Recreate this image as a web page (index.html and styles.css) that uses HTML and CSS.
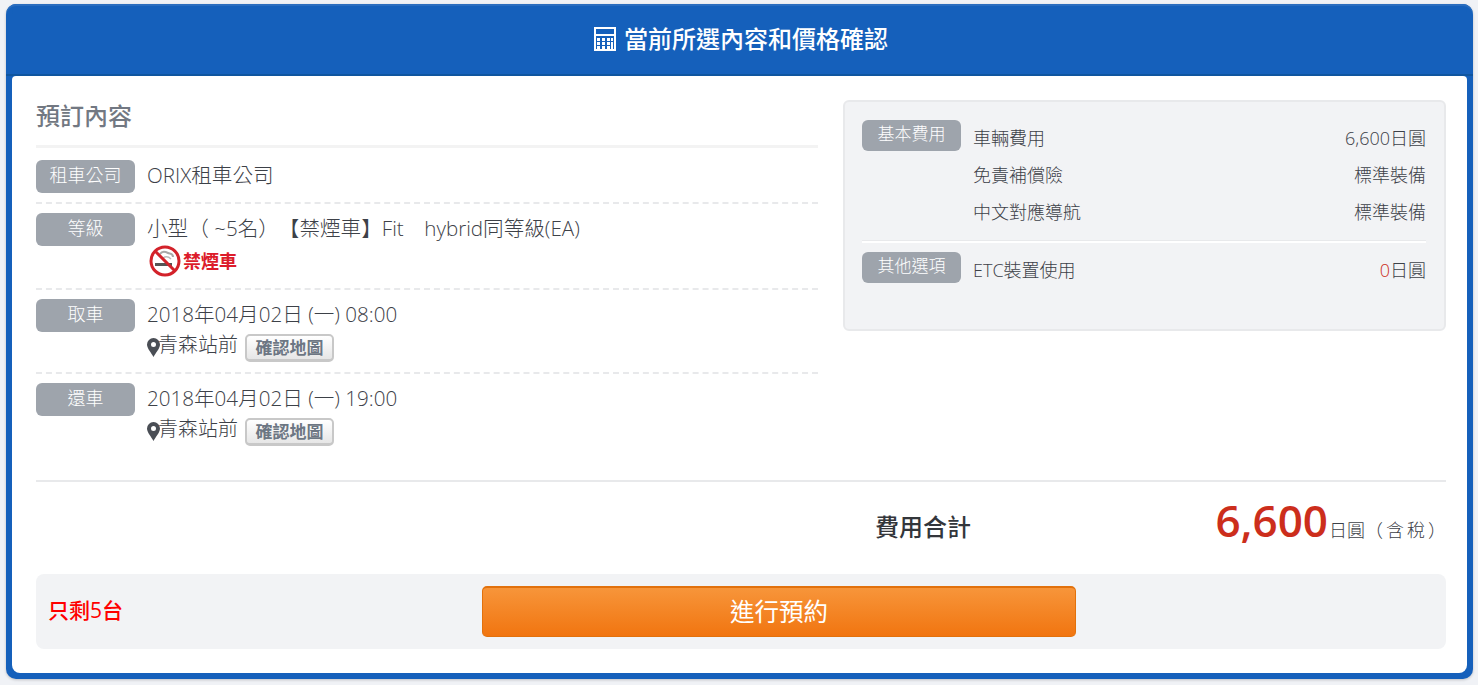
FILE: index.html
```html
<!DOCTYPE html>
<html lang="zh-Hant">
<head>
    <meta charset="UTF-8">
    <meta name="viewport" content="width=device-width, initial-scale=1.0">
    <title>當前所選內容和價格確認</title>
    <link rel="stylesheet" href="styles.css">
</head>
<body>
    <section class="confirm-panel">
        <h2 class="panel-title">
            <svg class="calc-icon" width="22" height="24" viewBox="0 0 22 24">
                <rect x="1" y="1" width="20" height="22" fill="none" stroke="#fff" stroke-width="2"/>
                <rect x="1" y="7" width="20" height="2" fill="#fff"/>
                <g fill="#fff">
                    <rect x="3" y="11" width="3" height="3"/><rect x="8" y="11" width="3" height="3"/><rect x="13" y="11" width="3" height="3"/><rect x="17" y="11" width="2" height="3"/>
                    <rect x="3" y="15" width="3" height="3"/><rect x="8" y="15" width="3" height="3"/><rect x="13" y="15" width="3" height="3"/><rect x="17" y="15" width="2" height="7"/>
                    <rect x="3" y="19" width="3" height="3"/><rect x="8" y="19" width="3" height="3"/><rect x="13" y="19" width="3" height="3"/>
                </g>
            </svg>
            當前所選內容和價格確認
        </h2>
        <div class="panel-body">
            <div class="summary">
                <div class="summary-left">
                    <h3 class="section-title">預訂內容</h3>
                    <div class="info-row">
                        <span class="tag">租車公司</span>
                        <div class="info-text"><p class="info-main">ORIX租車公司</p></div>
                    </div>
                    <div class="info-row">
                        <span class="tag">等級</span>
                        <div class="info-text">
                            <p class="info-main">小型（ ~5名）【禁煙車】Fit　hybrid同等級(EA)</p>
                            <p class="no-smoking">
                                <svg width="32" height="32" viewBox="0 0 32 32">
                                    <circle cx="16" cy="16" r="14" fill="#fff" stroke="#d3222a" stroke-width="3"/>
                                    <path d="M11 9c2-3 6-2 8-1s5 0 5 4" fill="none" stroke="#a8a8a8" stroke-width="2"/>
                                    <path d="M14 13c3-2 6-1 8 1" fill="none" stroke="#bbb" stroke-width="1.5"/>
                                    <rect x="6" y="18" width="17" height="3" fill="#555"/>
                                    <path d="M6 6l20 20" stroke="#d3222a" stroke-width="3"/>
                                </svg>
                                <span>禁煙車</span>
                            </p>
                        </div>
                    </div>
                    <div class="info-row">
                        <span class="tag">取車</span>
                        <div class="info-text">
                            <p class="info-main">2018年04月02日 (一) 08:00</p>
                            <p class="place">
                                <svg class="pin" width="13" height="19" viewBox="0 0 13 19"><path fill-rule="evenodd" fill="#4a4e55" d="M6.5 0a6.5 6.5 0 0 1 6.5 6.5C13 10.5 8.500 15 6.500 19 4.500 15 0 10.500 0 6.500A6.500 6.500 0 0 1 6.500 0zm0 4a2.500 2.500 0 1 0 0 5 2.500 2.500 0 0 0 0-5z"/></svg>
                                <span class="place-name">青森站前</span>
                                <a class="map-btn">確認地圖</a>
                            </p>
                        </div>
                    </div>
                    <div class="info-row">
                        <span class="tag">還車</span>
                        <div class="info-text">
                            <p class="info-main">2018年04月02日 (一) 19:00</p>
                            <p class="place">
                                <svg class="pin" width="13" height="19" viewBox="0 0 13 19"><path fill-rule="evenodd" fill="#4a4e55" d="M6.5 0a6.5 6.5 0 0 1 6.5 6.5C13 10.5 8.500 15 6.500 19 4.500 15 0 10.500 0 6.500A6.500 6.500 0 0 1 6.500 0zm0 4a2.500 2.500 0 1 0 0 5 2.500 2.500 0 0 0 0-5z"/></svg>
                                <span class="place-name">青森站前</span>
                                <a class="map-btn">確認地圖</a>
                            </p>
                        </div>
                    </div>
                </div>
                <div class="fee-box">
                    <div class="fee-group">
                        <span class="tag tag-small">基本費用</span>
                        <ul class="fee-list">
                            <li><span>車輛費用</span><span>6,600日圓</span></li>
                            <li><span>免責補償險</span><span>標準裝備</span></li>
                            <li><span>中文對應導航</span><span>標準裝備</span></li>
                        </ul>
                    </div>
                    <div class="fee-group fee-group-other">
                        <span class="tag tag-small">其他選項</span>
                        <ul class="fee-list">
                            <li><span>ETC裝置使用</span><span><em class="zero">0</em>日圓</span></li>
                        </ul>
                    </div>
                </div>
            </div>
            <div class="total-row">
                <span class="total-label">費用合計</span>
                <span class="total-price"><strong>6,600</strong>日圓<span class="tax">（含稅）</span></span>
            </div>
            <div class="action-bar">
                <span class="stock">只剩5台</span>
                <a class="reserve-btn">進行預約</a>
            </div>
        </div>
    </section>
</body>
</html>
```

FILE: styles.css
```css
* {
    margin: 0;
    padding: 0;
    box-sizing: border-box;
}

body {
    font-family: "Open Sans", "Noto Sans CJK TC", sans-serif;
    background-color: #f0f2f6;
    color: #3d4148;
    height: 685px;
    overflow: hidden;
    padding: 4px 5px 0 6px;
    text-spacing-trim: space-all;
}

.confirm-panel {
    background-color: #1560bb;
    border: 6px solid #1560bb;
    border-top-width: 0;
    border-radius: 10px;
    height: 675px;
    box-shadow: 0 1px 3px rgba(0, 0, 0, 0.2);
}

.panel-title {
    height: 72px;
    padding: 0 0 6px 3px;
    margin: 0 -6px;
    display: flex;
    align-items: center;
    justify-content: center;
    gap: 8px;
    color: #fff;
    font-size: 24px;
    font-weight: 500;
    border-radius: 10px 10px 0 0;
    box-shadow: inset 0 2px 0 #2a6dbf, inset 0 -2px 0 #0f559f;
}

.calc-icon {
    margin-top: 3px;
}

.panel-body {
    background-color: #fff;
    border-radius: 4px 4px 8px 8px;
    height: 597px;
    padding: 24px 21px 24px 24px;
}

.summary {
    display: flex;
    justify-content: space-between;
    align-items: flex-start;
    height: 382px;
    border-bottom: 2px solid #e8e9eb;
}

.summary-left {
    width: 782px;
}

.section-title {
    font-size: 24px;
    font-weight: 500;
    color: #727882;
    height: 48px;
    line-height: 31px;
    margin-bottom: 3px;
    border-bottom: 3px solid #f3f3f3;
}

.info-row {
    display: flex;
    gap: 12px;
    padding: 9px 0;
    border-bottom: 2px dashed #e8e9eb;
}

.info-row:last-child {
    border-bottom: 0;
}

.tag {
    flex: none;
    width: 99px;
    height: 33px;
    background-color: #9ea4ac;
    border-radius: 6px;
    color: #fff;
    font-size: 18px;
    font-weight: 300;
    line-height: 30px;
    text-align: center;
}

.info-text {
    font-size: 20.6px;
    font-weight: 300;
    line-height: 30px;
}

.info-main {
    min-height: 30px;
}

.no-smoking {
    display: flex;
    align-items: center;
    gap: 2px;
    height: 36px;
    padding-left: 2px;
    color: #dc1c2b;
    font-size: 18px;
    font-weight: 700;
    line-height: 30px;
}

.no-smoking span {
    margin-top: -1px;
}

.place {
    display: flex;
    align-items: center;
    height: 34px;
    font-size: 20px;
}

.pin {
    margin: 2px -2px 0 0;
}

.place-name {
    margin-top: -3px;
}

.map-btn {
    display: block;
    width: 89px;
    height: 28px;
    margin-top: 4px;
    margin-left: 7px;
    background: linear-gradient(#fff, #e6e6e6);
    border: 2px solid #c8c8c8;
    border-bottom-width: 3px;
    border-radius: 5px;
    color: #6c7683;
    font-size: 17px;
    font-weight: 700;
    line-height: 23px;
    text-align: center;
}

.fee-box {
    width: 603px;
    height: 231px;
    background-color: #f2f3f5;
    border: 2px solid #e8e9eb;
    border-radius: 6px;
    padding: 18px 18px 0 17px;
}

.fee-group {
    display: flex;
    gap: 12px;
    align-items: flex-start;
    padding-bottom: 9px;
    border-bottom: 1px solid #e8e9eb;
    box-shadow: 0 2px 0 #fff;
}

.fee-group-other {
    border-bottom: 0;
    box-shadow: none;
    padding-top: 11px;
}

.tag-small {
    height: 31px;
    font-size: 17px;
    line-height: 28px;
}

.fee-list {
    flex: 1;
    list-style: none;
    font-size: 18px;
    font-weight: 300;
}

.fee-list li {
    display: flex;
    justify-content: space-between;
    height: 37px;
    line-height: 37px;
}

.zero {
    color: #cc2e1c;
    font-style: normal;
}

.total-row {
    display: flex;
    align-items: center;
    justify-content: space-between;
    height: 92px;
    padding-left: 839px;
}

.total-label {
    margin-bottom: 6px;
    font-size: 24px;
    font-weight: 500;
    color: #33363b;
}

.total-price {
    margin: 0 -3px 16px 0;
    font-size: 18px;
    font-weight: 300;
}

.total-price strong {
    font-size: 44px;
    font-weight: 600;
    color: #cc2e1c;
    margin-right: 1px;
}

.tax {
    letter-spacing: 3px;
}

.action-bar {
    display: flex;
    align-items: center;
    height: 75px;
    background-color: #f2f3f5;
    border-radius: 8px;
}

.stock {
    flex: none;
    width: 446px;
    padding: 0 0 6px 12px;
    color: #f00;
    font-size: 21px;
    font-weight: 500;
}

.reserve-btn {
    display: block;
    width: 594px;
    height: 51px;
    background: linear-gradient(#f7953a, #f17510);
    border: 1px solid #e2710c;
    border-top-width: 2px;
    border-radius: 5px;
    color: #fff;
    font-size: 24.5px;
    line-height: 47px;
    text-align: center;
}
```
